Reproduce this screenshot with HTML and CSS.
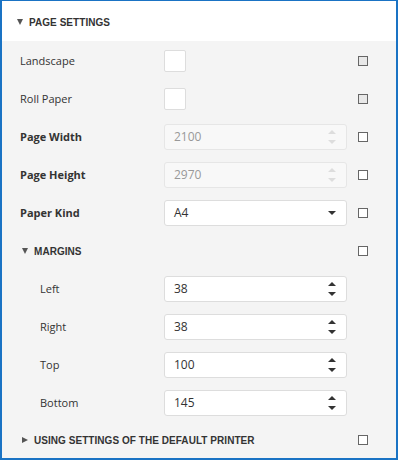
FILE: index.html
```html
<!DOCTYPE html>
<html lang="en">
<head>
    <meta charset="UTF-8">
    <meta name="viewport" content="width=device-width, initial-scale=1.0">
    <title>Page Settings</title>
    <link rel="stylesheet" href="styles.css">
</head>
<body>
    <div class="panel">
        <div class="group-header">
            <span class="caret down"></span>
            <span class="group-title">Page Settings</span>
        </div>

        <div class="group-body">
            <div class="row">
                <span class="label">Landscape</span>
                <div class="control"><span class="check-box"></span></div>
                <span class="mark filled"></span>
            </div>
            <div class="row">
                <span class="label">Roll Paper</span>
                <div class="control"><span class="check-box"></span></div>
                <span class="mark filled"></span>
            </div>
            <div class="row">
                <span class="label bold">Page Width</span>
                <div class="control">
                    <div class="field disabled">
                        <span class="value">2100</span>
                        <span class="spin"><i class="up"></i><i class="dn"></i></span>
                    </div>
                </div>
                <span class="mark"></span>
            </div>
            <div class="row">
                <span class="label bold">Page Height</span>
                <div class="control">
                    <div class="field disabled">
                        <span class="value">2970</span>
                        <span class="spin"><i class="up"></i><i class="dn"></i></span>
                    </div>
                </div>
                <span class="mark"></span>
            </div>
            <div class="row">
                <span class="label bold">Paper Kind</span>
                <div class="control">
                    <div class="field">
                        <span class="value">A4</span>
                        <span class="drop"></span>
                    </div>
                </div>
                <span class="mark"></span>
            </div>

            <div class="row sub-header">
                <span class="label"><span class="caret down"></span><span class="group-title">Margins</span></span>
                <div class="control"></div>
                <span class="mark"></span>
            </div>
            <div class="row nested">
                <span class="label">Left</span>
                <div class="control">
                    <div class="field">
                        <span class="value">38</span>
                        <span class="spin"><i class="up"></i><i class="dn"></i></span>
                    </div>
                </div>
            </div>
            <div class="row nested">
                <span class="label">Right</span>
                <div class="control">
                    <div class="field">
                        <span class="value">38</span>
                        <span class="spin"><i class="up"></i><i class="dn"></i></span>
                    </div>
                </div>
            </div>
            <div class="row nested">
                <span class="label">Top</span>
                <div class="control">
                    <div class="field">
                        <span class="value">100</span>
                        <span class="spin"><i class="up"></i><i class="dn"></i></span>
                    </div>
                </div>
            </div>
            <div class="row nested">
                <span class="label">Bottom</span>
                <div class="control">
                    <div class="field">
                        <span class="value">145</span>
                        <span class="spin"><i class="up"></i><i class="dn"></i></span>
                    </div>
                </div>
            </div>

            <div class="row footer">
                <span class="label"><span class="caret right"></span><span class="group-title">Using settings of the default printer</span></span>
                <span class="mark"></span>
            </div>
        </div>
    </div>
</body>
</html>
```

FILE: styles.css
```css
body {
    margin: 0;
    font-family: 'Segoe UI', 'Open Sans', sans-serif;
    font-size: 11px;
    color: #333;
}

.panel {
    width: 398px;
    height: 460px;
    box-sizing: border-box;
    border: 2px solid #1a73c4;
    border-top-width: 1px;
    background-color: #f4f4f4;
    display: flex;
    flex-direction: column;
}

.group-header {
    height: 40px;
    background-color: #fff;
    display: flex;
    align-items: center;
    padding-left: 15px;
    padding-top: 2px;
    box-sizing: border-box;
}

.group-title {
    font-family: 'Liberation Sans', Arial, sans-serif;
    font-weight: bold;
    font-size: 10px;
    letter-spacing: 0.05px;
    text-transform: uppercase;
    color: #333;
}

.caret {
    display: inline-block;
    width: 0;
    height: 0;
    margin-right: 6px;
}

.caret.down {
    border-left: 3.5px solid transparent;
    border-right: 3.5px solid transparent;
    border-top: 6px solid #555;
}

.caret.right {
    border-top: 3.5px solid transparent;
    border-bottom: 3.5px solid transparent;
    border-left: 6px solid #555;
}

.group-body {
    flex: 1;
    display: flex;
    flex-direction: column;
}

.row {
    height: 38px;
    box-sizing: border-box;
    padding-top: 1px;
    display: grid;
    grid-template-columns: 144px 183px 10px;
    align-items: center;
    padding-left: 18px;
}

.row .mark {
    margin-left: 11px;
}

.row.nested {
    padding-left: 38px;
    grid-template-columns: 124px 183px;
}

.row.sub-header,
.row.footer {
    padding-top: 2px;
}

.row.sub-header .label,
.row.footer .label {
    display: flex;
    align-items: center;
    margin-left: 2px;
}

.row.footer {
    height: 36px;
    grid-template-columns: 327px 10px;
}

.label {
    white-space: nowrap;
}

.label.bold {
    font-weight: bold;
}

.control {
    display: flex;
    align-items: center;
}

.check-box {
    width: 20px;
    height: 20px;
    background-color: #fff;
    border: 1px solid #ddd;
    border-radius: 2px;
}

.field {
    flex: 1;
    height: 24px;
    background-color: #fff;
    border: 1px solid #ddd;
    border-radius: 3px;
    display: flex;
    align-items: center;
    padding: 0 9px;
    font-size: 12px;
}

.field.disabled {
    background-color: #f8f8f8;
    border-color: #e6e6e6;
    color: #999;
}

.value {
    flex: 1;
}

.spin {
    display: flex;
    flex-direction: column;
    gap: 6px;
    margin-right: 1px;
}

.spin i {
    display: block;
    width: 0;
    height: 0;
    border-left: 4px solid transparent;
    border-right: 4px solid transparent;
}

.spin .up {
    border-bottom: 4px solid #333;
}

.spin .dn {
    border-top: 4px solid #333;
}

.field.disabled .spin .up {
    border-bottom-color: #ddd;
}

.field.disabled .spin .dn {
    border-top-color: #ddd;
}

.drop {
    width: 0;
    height: 0;
    border-left: 4px solid transparent;
    border-right: 4px solid transparent;
    border-top: 4px solid #333;
    margin-right: 1px;
}

.mark {
    width: 10px;
    height: 10px;
    box-sizing: border-box;
    border: 1.5px solid #666;
    background-color: #fff;
}

.mark.filled {
    background-color: #e8e8e8;
}
```
